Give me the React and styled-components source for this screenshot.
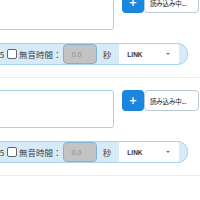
import styled, { createGlobalStyle } from 'styled-components';

const GlobalStyle = createGlobalStyle`
  html, body {
    margin: 0;
    padding: 0;
    background: #ffffff;
    overflow: hidden;
  }
  body {
    font-family: "Noto Sans CJK JP", "Noto Sans", sans-serif;
  }
`;

const Page = styled.div`
  width: 200px;
  height: 200px;
  overflow: hidden;
  position: relative;
`;

const List = styled.div`
  margin-top: -8px;
  margin-left: -24px;
  display: flex;
  flex-direction: column;
`;

const Block = styled.section`
  display: flex;
  flex-direction: column;
  padding-bottom: 12px;
  border-bottom: 1px solid #ebebeb;
  margin-bottom: 12px;
  width: 240px;
`;

const InputRow = styled.div`
  display: flex;
  align-items: flex-start;
`;

const TextBox = styled.textarea`
  box-sizing: border-box;
  width: 138px;
  height: 38px;
  border: 1px solid #a6d3e2;
  border-radius: 3px;
  resize: none;
  margin: 0;
  padding: 2px;
  background: #fff;
`;

const PlusButton = styled.button`
  box-sizing: border-box;
  margin-left: 8px;
  width: 22px;
  height: 21px;
  border: none;
  border-radius: 4px;
  background: #1a86dd;
  color: #fff;
  font-family: "DejaVu Sans", sans-serif;
  font-weight: bold;
  font-size: 10px;
  line-height: 1;
  padding: 0;
  display: flex;
  align-items: center;
  justify-content: center;
`;

const ReadButton = styled.button`
  box-sizing: border-box;
  width: 55px;
  height: 21px;
  border: 1px solid #b7c9d6;
  border-radius: 4px;
  background: #fff;
  color: #222;
  font-family: "Noto Sans CJK JP", sans-serif;
  font-size: 6.5px;
  letter-spacing: -0.2px;
  padding: 0 0 0 5px;
  text-align: left;
  white-space: nowrap;
`;

const ControlBar = styled.div`
  box-sizing: border-box;
  margin-top: 13px;
  width: 212px;
  height: 22px;
  display: flex;
  align-items: center;
  background: #d6eaf8;
  border: 1px solid #a9d3ef;
  border-radius: 10px;
  padding: 0 8px 0 16px;
  color: #444;
`;

const Label = styled.span`
  font-size: ${p => p.$size || 8.5}px;
  white-space: nowrap;
  color: #3d3d3d;
  margin-left: ${p => p.$ml || 0}px;
`;

const Check = styled.span`
  box-sizing: border-box;
  width: 10px;
  height: 10px;
  margin-left: 3px;
  border: 1px solid #666;
  border-radius: 2px;
  background: #fff;
  flex: none;
`;

const TimeInput = styled.div`
  box-sizing: border-box;
  width: 35px;
  height: 20px;
  margin-left: 1px;
  border: 1px solid #7db3d8;
  border-radius: 4px;
  background: #c3c3c3;
  color: #8a8a8a;
  font-family: "Liberation Sans", sans-serif;
  font-size: 7px;
  display: flex;
  align-items: center;
  padding-left: 8px;
`;

const Select = styled.div`
  box-sizing: border-box;
  width: 61px;
  height: 20px;
  margin-left: 8px;
  background: #fff;
  border-radius: 2px;
  display: flex;
  align-items: center;
  justify-content: space-between;
  padding: 0 9px 0 8px;
  font-family: "Liberation Sans", sans-serif;
  font-size: 6.5px;
  font-weight: bold;
  color: #333;
`;

const Caret = styled.span`
  width: 0;
  height: 0;
  border-left: 2.5px solid transparent;
  border-right: 2.5px solid transparent;
  border-top: 2.5px solid #777;
`;

const Item = () => (
  <Block>
    <InputRow>
      <TextBox />
      <PlusButton>+</PlusButton>
      <ReadButton>読み込み中...</ReadButton>
    </InputRow>
    <ControlBar>
      <Label $size={8}>1.5</Label>
      <Check />
      <Label $ml={2}>無音時間：</Label>
      <TimeInput>0.0</TimeInput>
      <Label $ml={6}>秒</Label>
      <Select>
        <span>LINK</span>
        <Caret />
      </Select>
    </ControlBar>
  </Block>
);

export default function App() {
  return (
    <Page>
      <GlobalStyle />
      <List>
        <Item />
        <Item />
      </List>
    </Page>
  );
}
